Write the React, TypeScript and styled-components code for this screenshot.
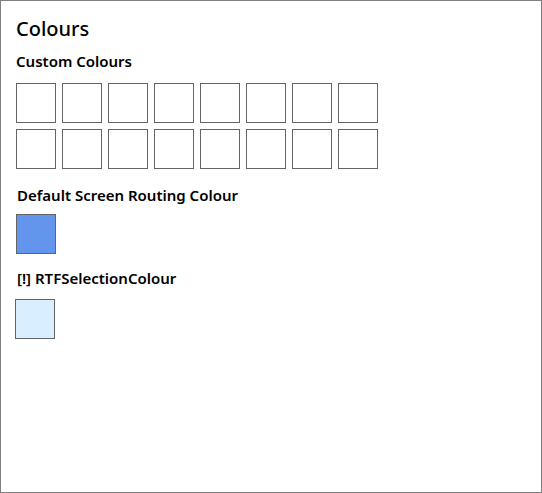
import React from "react";
import styled, { createGlobalStyle } from "styled-components";

const Global = createGlobalStyle`
  html, body { margin: 0; padding: 0; background: #ffffff; }
  body { font-family: "Segoe UI", "Noto Sans", "Open Sans", sans-serif; color: #000; }
`;

const Frame = styled.div`
  box-sizing: border-box;
  width: 542px;
  height: 493px;
  border: 1px solid #808080;
  padding: 14px 15px;
  display: flex;
  flex-direction: column;
`;

const Title = styled.h1`
  margin: 0;
  font-size: 20px;
  font-weight: 500;
  line-height: 28px;
`;

const SectionLabel = styled.h2<{ $indent?: number; $top: number }>`
  margin: ${(p) => p.$top}px 0 0 ${(p) => p.$indent ?? 0}px;
  font-size: 15px;
  font-weight: 600;
  line-height: 20px;
`;

const Grid = styled.div`
  display: grid;
  grid-template-columns: repeat(8, 40px);
  grid-auto-rows: 40px;
  gap: 6px;
  margin-top: 12px;
`;

const Swatch = styled.div<{ $fill: string; $shift?: number; $top?: number }>`
  box-sizing: border-box;
  width: 40px;
  height: 40px;
  border: 1px solid #646464;
  background: ${(p) => p.$fill};
  margin-left: ${(p) => p.$shift ?? 0}px;
  margin-top: ${(p) => p.$top ?? 0}px;
`;

export default function App() {
  return (
    <>
      <Global />
      <Frame>
        <Title>Colours</Title>
        <SectionLabel $top={8}>Custom Colours</SectionLabel>
        <Grid>
          {Array.from({ length: 16 }).map((_, i) => (
            <Swatch key={i} $fill="#ffffff" />
          ))}
        </Grid>
        <SectionLabel $top={16} $indent={1}>Default Screen Routing Colour</SectionLabel>
        <Swatch $fill="#6495ed" $top={9} />
        <SectionLabel $top={14} $indent={1}>[!] RTFSelectionColour</SectionLabel>
        <Swatch $fill="#d9eeff" $top={11} $shift={-1} />
      </Frame>
    </>
  );
}
